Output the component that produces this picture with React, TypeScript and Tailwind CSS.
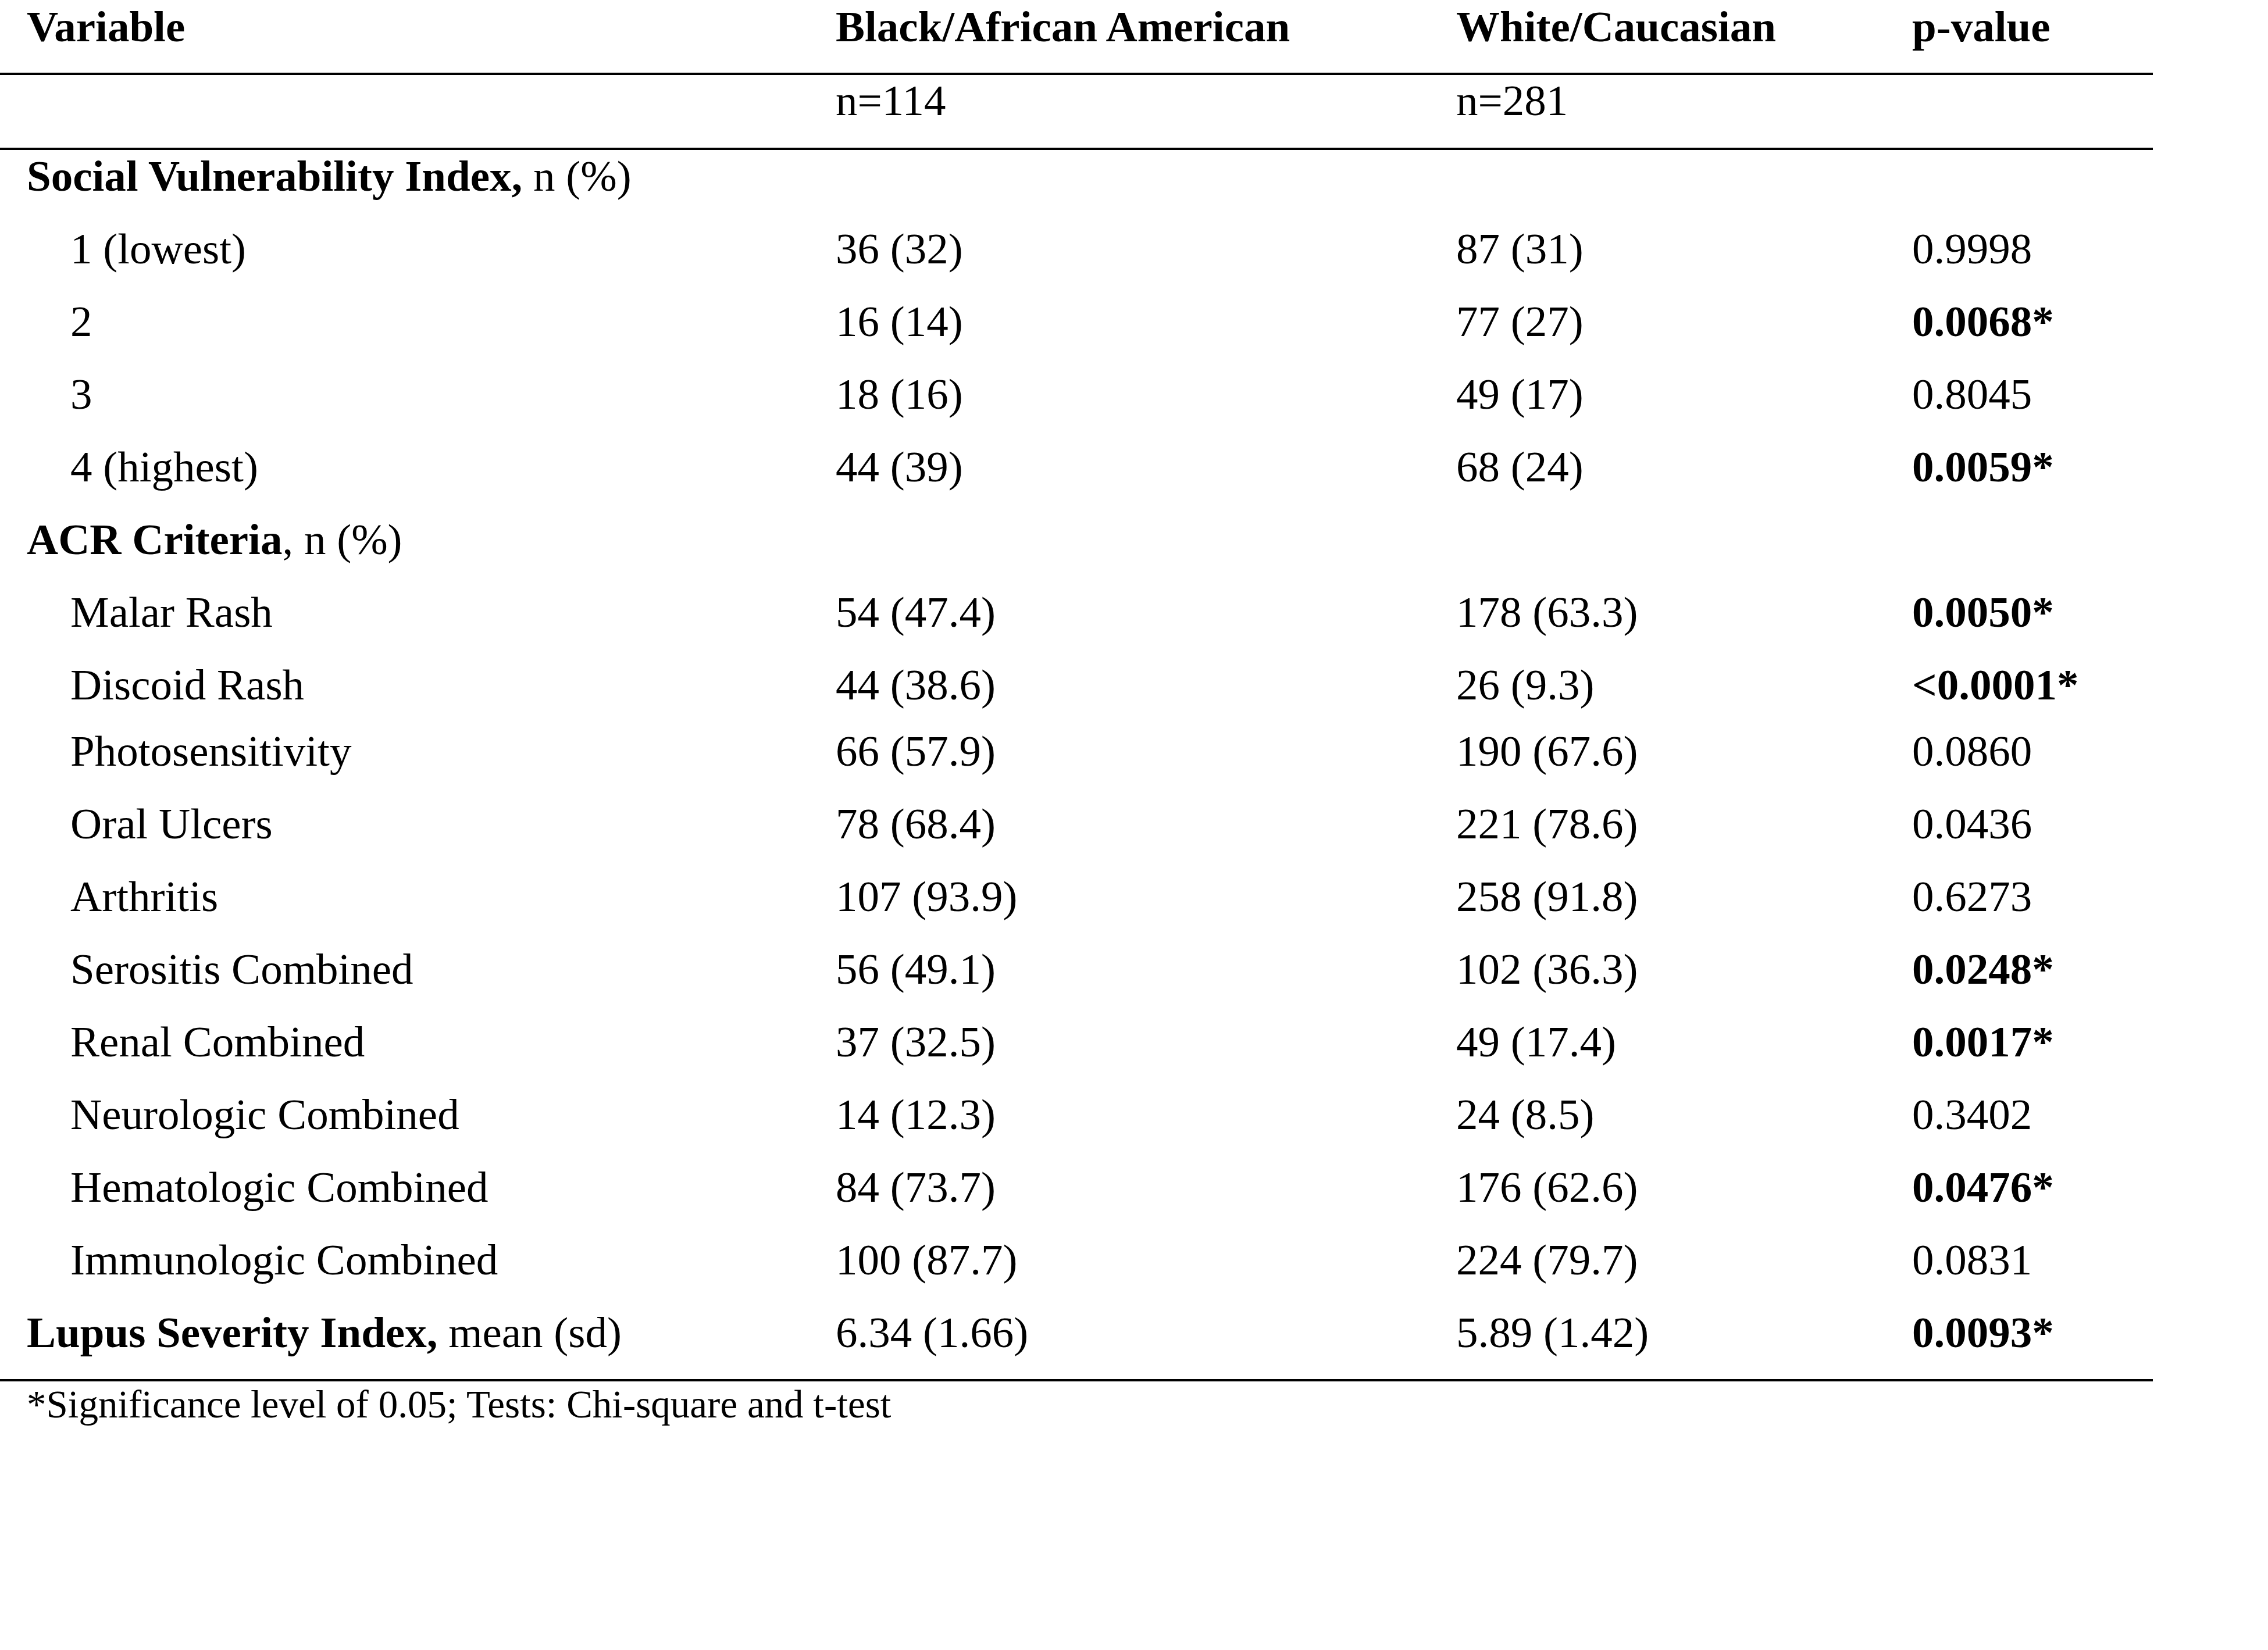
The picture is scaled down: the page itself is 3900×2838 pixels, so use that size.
import React from "react";

type Row = {
  label: React.ReactNode;
  indent?: boolean;
  black?: string;
  white?: string;
  p?: string;
  sig?: boolean;
  h?: string;
};

const rows: Row[] = [
  {
    label: (
      <>
        <b>Social Vulnerability Index,</b> n (%)
      </>
    ),
  },
  { label: "1 (lowest)", indent: true, black: "36 (32)", white: "87 (31)", p: "0.9998" },
  { label: "2", indent: true, black: "16 (14)", white: "77 (27)", p: "0.0068*", sig: true },
  { label: "3", indent: true, black: "18 (16)", white: "49 (17)", p: "0.8045" },
  { label: "4 (highest)", indent: true, black: "44 (39)", white: "68 (24)", p: "0.0059*", sig: true },
  {
    label: (
      <>
        <b>ACR Criteria</b>, n (%)
      </>
    ),
  },
  { label: "Malar Rash", indent: true, black: "54 (47.4)", white: "178 (63.3)", p: "0.0050*", sig: true },
  { label: "Discoid Rash", indent: true, black: "44 (38.6)", white: "26 (9.3)", p: "<0.0001*", sig: true, h: "h-[114px]" },
  { label: "Photosensitivity", indent: true, black: "66 (57.9)", white: "190 (67.6)", p: "0.0860" },
  { label: "Oral Ulcers", indent: true, black: "78 (68.4)", white: "221 (78.6)", p: "0.0436" },
  { label: "Arthritis", indent: true, black: "107 (93.9)", white: "258 (91.8)", p: "0.6273" },
  { label: "Serositis Combined", indent: true, black: "56 (49.1)", white: "102 (36.3)", p: "0.0248*", sig: true },
  { label: "Renal Combined", indent: true, black: "37 (32.5)", white: "49 (17.4)", p: "0.0017*", sig: true },
  { label: "Neurologic Combined", indent: true, black: "14 (12.3)", white: "24 (8.5)", p: "0.3402" },
  { label: "Hematologic Combined", indent: true, black: "84 (73.7)", white: "176 (62.6)", p: "0.0476*", sig: true },
  { label: "Immunologic Combined", indent: true, black: "100 (87.7)", white: "224 (79.7)", p: "0.0831" },
  {
    label: (
      <>
        <b>Lupus Severity Index,</b> mean (sd)
      </>
    ),
    black: "6.34 (1.66)",
    white: "5.89 (1.42)",
    p: "0.0093*",
    sig: true,
    h: "h-[122px] box-content border-b-4 border-black",
  },
];

const grid = "grid grid-cols-[1437px_1067px_784px_414px]";

export default function App() {
  return (
    <div className="min-h-screen bg-white text-black font-['Liberation_Serif','Times_New_Roman',serif]">
      <div className="w-[3702px]">
        <div className={`${grid} h-[129px] border-b-4 border-black pt-[4px] text-[75px] leading-[83px] font-bold`}>
          <div className="pl-[46px]">Variable</div>
          <div>Black/African American</div>
          <div>White/Caucasian</div>
          <div>p-value</div>
        </div>

        <div className={`${grid} h-[129px] border-b-4 border-black pt-[2px] text-[75px] leading-[83px]`}>
          <div />
          <div>n=114</div>
          <div>n=281</div>
          <div />
        </div>

        <div className="pt-[3px] text-[75px] leading-[83px]">
          {rows.map((r, i) => (
            <div key={i} className={`${grid} ${r.h ?? "h-[125px]"}`}>
              <div className={r.indent ? "pl-[121px] whitespace-nowrap" : "pl-[46px] whitespace-nowrap"}>
                {r.label}
              </div>
              <div>{r.black}</div>
              <div>{r.white}</div>
              <div className={r.sig ? "font-bold" : ""}>{r.p}</div>
            </div>
          ))}
        </div>

        <div className="pt-[2px] pl-[46px] text-[67px] leading-[74px]">
          *Significance level of 0.05; Tests: Chi-square and t-test
        </div>
      </div>
    </div>
  );
}
